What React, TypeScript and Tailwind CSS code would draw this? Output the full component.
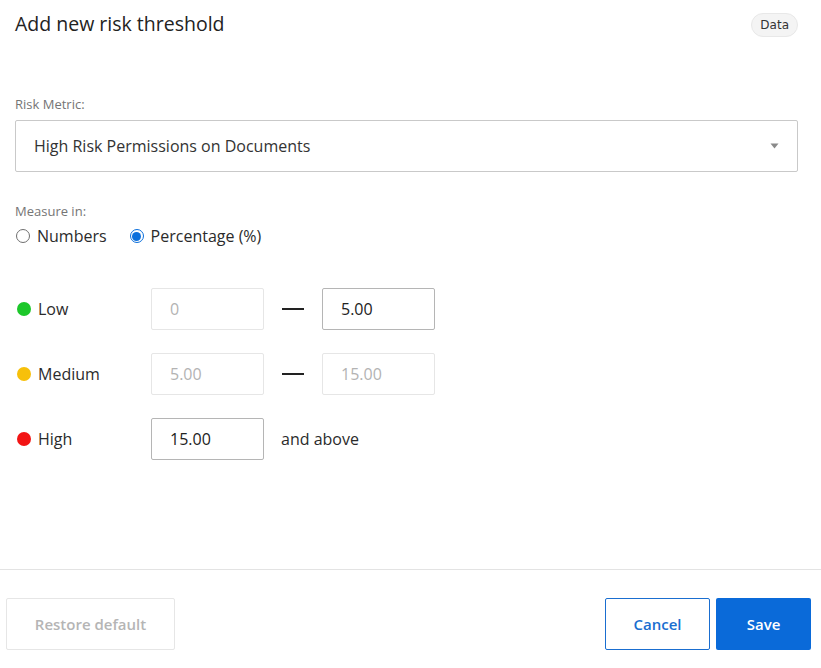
import React from "react";

type Level = {
  name: string;
  dot: string;
  from: string;
  to?: string;
  fromEditable?: boolean;
  toEditable?: boolean;
};

const levels: Level[] = [
  { name: "Low", dot: "bg-[#1cc72a]", from: "0", to: "5.00", toEditable: true },
  { name: "Medium", dot: "bg-[#f7c00a]", from: "5.00", to: "15.00" },
  { name: "High", dot: "bg-[#f21414]", from: "15.00", fromEditable: true },
];

function Radio({ label, checked }: { label: string; checked?: boolean }) {
  return (
    <label className="flex items-center gap-[7px]">
      {checked ? (
        <span className="flex h-[14px] w-[14px] items-center justify-center rounded-full border border-[#0b6fdc] bg-white">
          <span className="h-[9px] w-[9px] rounded-full bg-[#0b6fdc]" />
        </span>
      ) : (
        <span className="h-[14px] w-[14px] rounded-full border border-[#6f6f6f] bg-white" />
      )}
      <span className="text-[16px] text-[#2b2b2b]">{label}</span>
    </label>
  );
}

function Field({ value, editable }: { value: string; editable?: boolean }) {
  return (
    <div
      className={`flex h-[42px] w-[113px] items-center rounded-[2px] border px-[18px] text-[16px] ${
        editable ? "border-[#b5b5b5] text-[#222]" : "border-[#e6e6e6] text-[#b3b3b3]"
      }`}
    >
      {value}
    </div>
  );
}

export default function App() {
  return (
    <div
      className="flex h-[668px] w-[821px] flex-col bg-white text-[#2b2b2b]"
      style={{ fontFamily: '"Open Sans", "Noto Sans", sans-serif' }}
    >
      <div className="flex items-start justify-between pl-[15px] pr-[23px] pt-[10px]">
        <h1 className="text-[19.5px] leading-[28px] text-[#222]">Add new risk threshold</h1>
        <span
          className="mt-[3px] rounded-full border border-[#e8e8e8] bg-[#f4f4f4] px-[8px] py-[2px] text-[12px] leading-[18px] text-[#333]"
          style={{ fontFamily: '"DejaVu Sans", sans-serif' }}
        >
          Data
        </span>
      </div>

      <div className="px-[15px] pt-[57px]">
        <div className="text-[13px] leading-[18px] text-[#757575]">Risk Metric:</div>
        <div className="mr-[8px] mt-[7px] flex h-[52px] items-center justify-between rounded-[2px] border border-[#c9c9c9] pl-[18px] pr-[18px]">
          <span className="text-[16px] text-[#333]">High Risk Permissions on Documents</span>
          <svg width="9" height="6" viewBox="0 0 9 6">
            <path d="M0.5 0.5h8L4.5 5.5z" fill="#8a8a8a" />
          </svg>
        </div>

        <div className="mt-[30px] text-[13px] leading-[18px] text-[#757575]">Measure in:</div>
        <div className="mt-[4px] flex items-center gap-[23px] pl-[1px]">
          <Radio label="Numbers" />
          <Radio label="Percentage (%)" checked />
        </div>

        <div className="mt-[40px] flex flex-col gap-[23px]">
          {levels.map((l) => (
            <div key={l.name} className="flex h-[42px] items-center">
              <div className="flex w-[136px] items-center gap-[7px] pl-[2px]">
                <span className={`h-[14px] w-[14px] rounded-full ${l.dot}`} />
                <span className="text-[16px] text-[#2b2b2b]">{l.name}</span>
              </div>
              <Field value={l.from} editable={l.fromEditable} />
              {l.to !== undefined ? (
                <>
                  <span className="mx-[18px] h-[2px] w-[22px] bg-[#222]" />
                  <Field value={l.to} editable={l.toEditable} />
                </>
              ) : (
                <span className="ml-[17px] text-[16px] text-[#2b2b2b]">and above</span>
              )}
            </div>
          ))}
        </div>
      </div>

      <div className="mt-auto border-t border-[#e3e3e3] pb-[18px] pl-[6px] pr-[10px] pt-[28px]">
        <div className="flex items-center justify-between">
          <button className="h-[52px] w-[169px] rounded-[2px] border border-[#e6e6e6] text-[15px] font-semibold text-[#b5b5b5]">
            Restore default
          </button>
          <div className="flex gap-[6px]">
            <button className="h-[52px] w-[105px] rounded-[2px] border border-[#1a6ed0] text-[15px] font-semibold text-[#1a6ed0]">
              Cancel
            </button>
            <button className="h-[52px] w-[95px] rounded-[2px] bg-[#0a6ad9] text-[15px] font-semibold text-white">
              Save
            </button>
          </div>
        </div>
      </div>
    </div>
  );
}
